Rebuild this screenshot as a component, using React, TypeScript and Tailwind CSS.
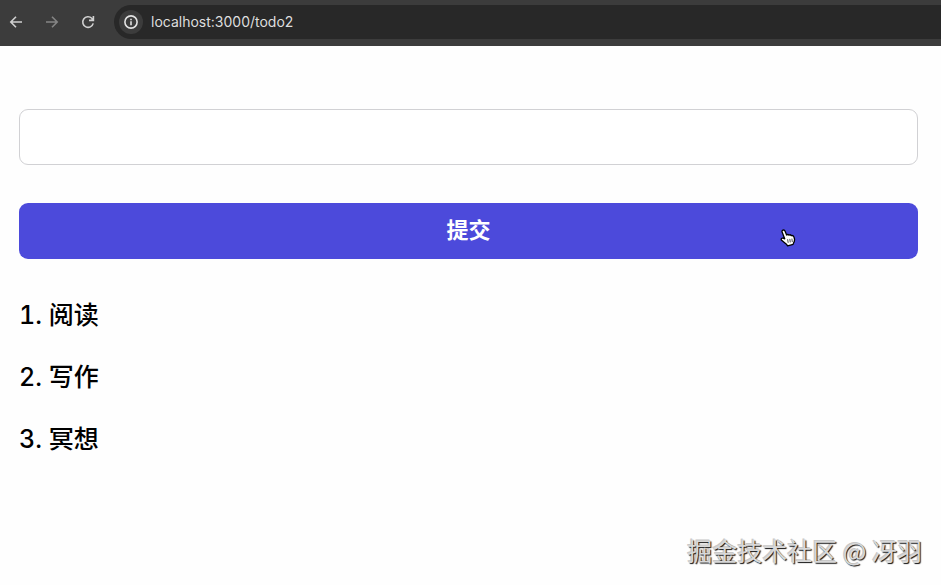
import React, { useState } from 'react';

const initialTodos = ['阅读', '写作', '冥想'];

function BrowserBar() {
  return (
    <header className="flex h-[46px] items-center bg-[#3c3c3c] pb-[2px]">
      <nav className="flex shrink-0 items-center gap-5 pl-2 pr-[18px]">
        <button type="button" aria-label="Back" className="text-[#d0d0d0]">
          <svg width="16" height="16" viewBox="0 0 16 16" fill="none" stroke="currentColor" strokeWidth="1.6">
            <path d="M14 8H3M8 2.8L2.8 8L8 13.2" />
          </svg>
        </button>
        <button type="button" aria-label="Forward" className="text-[#858585]">
          <svg width="16" height="16" viewBox="0 0 16 16" fill="none" stroke="currentColor" strokeWidth="1.6">
            <path d="M2 8H13M8 2.8L13.2 8L8 13.2" />
          </svg>
        </button>
        <button type="button" aria-label="Reload" className="text-[#d0d0d0]">
          <svg width="16" height="16" viewBox="0 0 16 16" fill="none" stroke="currentColor" strokeWidth="1.6">
            <path d="M13.2 9.4A5.3 5.3 0 1 1 11.8 4.3L13 5.6" />
            <path d="M13.4 2V6.4H9" />
            <path d="M13.4 3.6V6.4H10.6Z" fill="currentColor" stroke="none" />
          </svg>
        </button>
      </nav>
      <div className="flex h-[34px] min-w-0 flex-1 items-center gap-2 rounded-l-full bg-[#282828] pl-[5px]">
        <button
          type="button"
          aria-label="Site information"
          className="flex h-6 w-6 shrink-0 items-center justify-center rounded-full bg-[#3c3c3c] text-[#e3e3e3]"
        >
          <svg width="14" height="14" viewBox="0 0 14 14" fill="none" stroke="currentColor" strokeWidth="1.6">
            <circle cx="7" cy="7" r="6.1" />
            <path d="M7 6.2V10.2M7 3.7V5.2" />
          </svg>
        </button>
        <input
          aria-label="Address"
          defaultValue="localhost:3000/todo2"
          className="min-w-0 flex-1 bg-transparent font-['Inter','Liberation_Sans',sans-serif] text-[14px] leading-5 text-[#dedede] outline-none"
        />
      </div>
    </header>
  );
}

function HandPointer() {
  return (
    <svg width="16" height="18" viewBox="0 0 16 18" aria-hidden="true">
      <path
        d="M2.9 1.2C3.9.8 4.7 1.3 5.1 2.2L6.6 6C7.2 5.3 8.3 5.3 8.9 6.1C9.7 5.6 10.8 5.8 11.3 6.6C12.4 6.3 13.5 6.8 13.9 7.9L14.5 10C14.8 12 14.2 13.2 13.4 14.4L13.1 15.4L7.6 16.8L6.4 15.2C4.9 14 3.3 12.8 1.6 11.3C.6 10.2 1.8 8.7 3.2 9.2L4.7 9.8L2.1 3C1.8 2.2 2.1 1.5 2.9 1.2Z"
        fill="#fff"
        stroke="#000"
        strokeWidth="1.3"
        strokeLinejoin="round"
      />
      <path d="M7.6 10.2L8.2 13.8M9.8 9.9L10.3 13.4M11.9 9.6L12.3 13" stroke="#000" strokeWidth="0.7" />
    </svg>
  );
}

export default function App() {
  const [todos, setTodos] = useState(initialTodos);
  const [text, setText] = useState('');

  const handleSubmit = (e: React.FormEvent) => {
    e.preventDefault();
    if (!text.trim()) return;
    setTodos([...todos, text.trim()]);
    setText('');
  };

  return (
    <div className="relative min-h-screen bg-[#fefefe] font-['Inter','Noto_Sans_CJK_SC',sans-serif] text-black">
      <BrowserBar />
      <main className="pl-[19px] pr-[23px] pt-[63px]">
        <form onSubmit={handleSubmit} className="flex flex-col gap-[38px]">
          <input
            type="text"
            aria-label="待办事项"
            value={text}
            onChange={(e) => setText(e.target.value)}
            className="h-14 w-full rounded-[9px] border border-[#d1d1d4] bg-white px-4 text-[22px] outline-none"
          />
          <div className="relative">
            <button
              type="submit"
              className="h-14 w-full rounded-[9px] bg-[#4c4adb] pb-[2px] text-[22px] font-bold text-white"
            >
              提交
            </button>
            <span className="pointer-events-none absolute right-[122px] top-[26px]">
              <HandPointer />
            </span>
          </div>
        </form>
        <ul className="mt-[37px] space-y-6 text-[25px] font-medium leading-[38px] tabular-nums">
          {todos.map((todo, i) => (
            <li key={i}>
              {i + 1}. {todo}
            </li>
          ))}
        </ul>
      </main>
      <p className="pointer-events-none absolute bottom-[15px] right-[19px] font-['Noto_Sans_CJK_SC',sans-serif] text-[25px] leading-10 text-[#d8d8d8] [text-shadow:1px_1px_1px_#111,-1px_-1px_0px_#c8c8c8]">
        掘金技术社区 @ 冴羽
      </p>
    </div>
  );
}
